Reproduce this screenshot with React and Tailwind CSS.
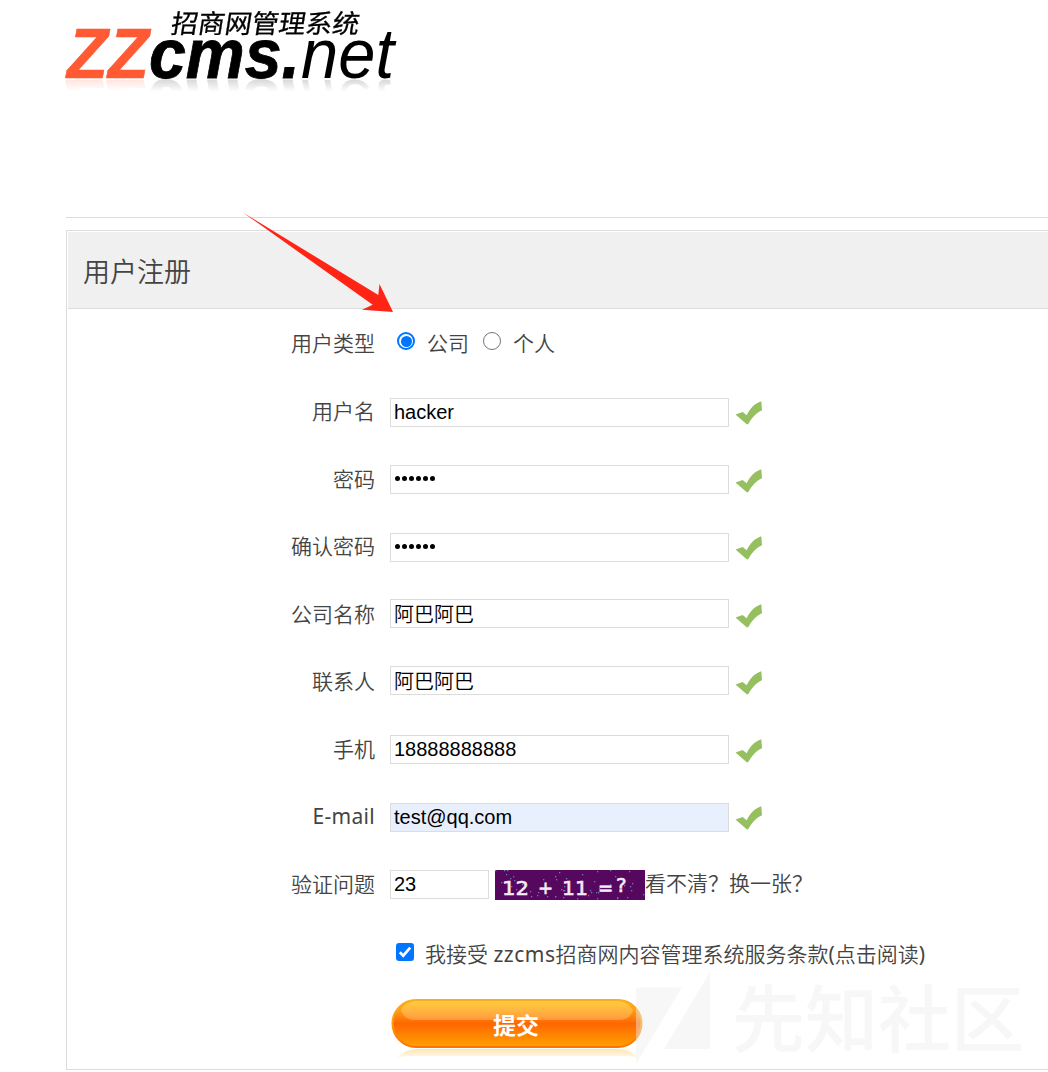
import React from "react";

const LATIN = "font-['Liberation_Sans','Noto_Sans_CJK_SC',sans-serif]";

function Logo() {
  return (
    <svg
      className={`block h-[79px] w-[420px] [-webkit-box-reflect:below_0px_linear-gradient(transparent_84%,rgba(0,0,0,0.16))] ${LATIN}`}
      viewBox="0 0 420 79"
    >
      <text x="67" y="78" fontSize="70" fontWeight="700" fontStyle="italic" fill="#ff5a33" stroke="#ff5a33" strokeWidth="0.6" textLength="82" lengthAdjust="spacingAndGlyphs">ZZ</text>
      <text x="149" y="78" fontSize="70" fontWeight="700" fontStyle="italic" stroke="#000" strokeWidth="0.8" textLength="151" lengthAdjust="spacingAndGlyphs">cms.</text>
      <text x="301" y="78" fontSize="70" fontStyle="italic" textLength="93" lengthAdjust="spacingAndGlyphs">net</text>
      <text transform="translate(170 32.5) skewX(-9)" x="0" y="0" fontSize="26" fontWeight="400" stroke="#000" strokeWidth="0.3" textLength="188" lengthAdjust="spacingAndGlyphs">招商网管理系统</text>
    </svg>
  );
}

function Tick() {
  return (
    <svg className="h-[24px] w-[28px]" viewBox="735 401 28 24">
      <path d="M735.5 414.6 742.6 412 746.7 415.3C750 408.5 754.5 403.5 761.3 401.3L762 410.3C756.5 412.8 751.5 418 748.2 424.3L746.7 424.2Z" fill="#96bf60" />
    </svg>
  );
}

function Label({ children, latin }) {
  return <div className={`-mt-px h-[67.5px] w-[308px] shrink-0 text-right leading-[68px] ${latin ? "font-normal tracking-[0.3px]" : ""}`}>{children}</div>;
}

const FIELDS = [
  { label: "用户名", value: "hacker", pos: "mt-[20px]" },
  { label: "密码", value: "••••••", pos: "mt-[19.5px]", dots: true },
  { label: "确认密码", value: "••••••", pos: "mt-[20px]", dots: true },
  { label: "公司名称", value: "阿巴阿巴", pos: "mt-[18.5px]", cjk: true },
  { label: "联系人", value: "阿巴阿巴", pos: "mt-[18px]", cjk: true },
  { label: "手机", value: "18888888888", pos: "mt-[19.5px]" },
  { label: "E-mail", value: "test@qq.com", pos: "mt-[20px]", filled: true },
];

function Box({ value, pos, filled, dots, cjk, width = "w-[339px]" }) {
  return (
    <div className={`ml-[15px] flex h-[29px] shrink-0 items-center border border-[#dcdcdc] pl-[3px] text-[20px] leading-[27px] text-black ${LATIN} ${width} ${pos} ${cjk ? "pt-[3px]" : ""} ${filled ? "bg-[#e8f0fe]" : "bg-white"}`}>
      {dots ? (
        <span className="flex gap-[2px] pb-[2px] pl-px" role="img" aria-label="password">
          {[...value].map((_, i) => <i key={i} className="size-[5px] rounded-full bg-black" />)}
        </span>
      ) : value}
    </div>
  );
}

const SPECKS = Array.from({ length: 60 }, (_, i) => [(i * 47 + (i * i * 13) % 31) % 149, (i * 19 + (i * i * 7) % 23) % 29]);

function Captcha() {
  return (
    <svg className="ml-[6px] mt-[19.5px] h-[30px] w-[150px] shrink-0 font-['DejaVu_Sans',sans-serif]" viewBox="0 0 150 30">
      <rect width="150" height="30" fill="#56085f" />
      {SPECKS.map(([x, y], i) => <rect key={i} x={x} y={y} width="1.3" height="1.3" fill="#6a78ad" />)}
      <g fill="#f6eaf6" stroke="#f6eaf6" strokeWidth="0.6" fontSize="20" fontWeight="400">
        <text x="7" y="25" textLength="27" lengthAdjust="spacingAndGlyphs">12</text>
        <text x="43" y="24" fontSize="18">+</text>
        <text x="67" y="25" textLength="26" lengthAdjust="spacingAndGlyphs">11</text>
        <text x="103" y="24" fontSize="18">=</text>
        <text x="121" y="22">?</text>
      </g>
    </svg>
  );
}

function SubmitButton() {
  return (
    <div className="relative ml-[324px] h-[61px] w-[252px]">
      <svg className="block h-[61px] w-[252px]" viewBox="0 0 252 61">
        <defs>
          <linearGradient id="body" x1="0" y1="0" x2="0" y2="1">
            <stop offset="0" stopColor="#ffb91f" />
            <stop offset="0.25" stopColor="#ff9712" />
            <stop offset="0.5" stopColor="#ff6600" />
            <stop offset="0.75" stopColor="#ff8500" />
            <stop offset="1" stopColor="#ff9f00" />
          </linearGradient>
          <linearGradient id="edge" x1="0" y1="0" x2="0" y2="1">
            <stop offset="0" stopColor="#f6ae22" />
            <stop offset="0.5" stopColor="#ff9a10" />
            <stop offset="1" stopColor="#ff7300" />
          </linearGradient>
          <linearGradient id="gloss" x1="0" y1="0" x2="0" y2="1">
            <stop offset="0" stopColor="#ffcf40" stopOpacity="0.8" />
            <stop offset="1" stopColor="#ffb870" stopOpacity="0.5" />
          </linearGradient>
          <linearGradient id="under" x1="0" y1="50" x2="0" y2="59" gradientUnits="userSpaceOnUse">
            <stop offset="0" stopColor="#ffe6b0" />
            <stop offset="1" stopColor="#fffaf0" />
          </linearGradient>
        </defs>
        <path d="M6 59C12 53 18 50 28 50H226C236 50 242 53 247 59C239 57 235 57 226 57H28C18 57 12 57 6 59Z" fill="url(#under)" />
        <rect x="1.5" y="1" width="249" height="47" rx="23.5" fill="url(#body)" stroke="url(#edge)" strokeWidth="2" />
        <path d="M10 11C14 4 20 2 28 2H224C233 2 238 5 242 11C240 18 235 21 228 21H24C17 21 12 18 10 11Z" fill="url(#gloss)" />
      </svg>
      <span className="absolute left-0 top-[11px] w-[250px] text-center text-[23px] font-bold leading-[30px] text-white">提交</span>
    </div>
  );
}

export default function App() {
  return (
    <main className="relative h-[1072px] w-[1048px] overflow-hidden bg-white font-['Noto_Sans','Noto_Sans_CJK_SC',sans-serif] text-[21px] font-[350] text-[#444]">
      <header className="h-[217px]"><Logo /></header>
      <div className="ml-[66px] h-px bg-[#dcdcdc]" />
      <section className="ml-[66px] mt-[12px] h-[840px] border-y border-l border-[#dcdcdc]">
        <h1 className="ml-px mt-px h-[77px] border-b border-[#dcdcdc] bg-[#f0f0f0] pl-[15px] text-[27px] font-[350] leading-[80px]">用户注册</h1>
        <div className="flex h-[69px]">
          <div className="w-[308px] text-right leading-[69px]">用户类型</div>
          <span className="ml-[22px] mt-[23px] flex size-[18px] items-center justify-center rounded-full border-2 border-[#0075ff]"><i className="size-[11px] rounded-full bg-[#0075ff]" /></span>
          <span className="ml-[12px] leading-[69px]">公司</span>
          <span className="ml-[14px] mt-[23px] size-[18px] rounded-full border-[1.5px] border-[#767676]" />
          <span className="ml-[12px] leading-[69px]">个人</span>
        </div>
        {FIELDS.map((f) => (
          <div key={f.label} className="flex h-[67.5px]">
            <Label latin={f.filled}>{f.label}</Label>
            <Box {...f} />
            <div className="ml-[6px] mt-[23px]"><Tick /></div>
          </div>
        ))}
        <div className="flex h-[67.5px]">
          <Label>验证问题</Label>
          <Box value="23" pos="mt-[19.5px]" width="w-[99px]" />
          <Captcha />
          <span className="-mt-px whitespace-nowrap leading-[67.5px]">看不清？换一张？</span>
        </div>
        <div className="flex h-[81px]">
          <span className="ml-[329px] mt-[25px] flex size-[18px] items-center justify-center rounded-[3px] bg-[#0075ff]">
            <svg className="size-[18px]" viewBox="0 0 18 18"><path d="M3.8 9.3 7.2 12.7 14.2 4.7" fill="none" stroke="#fff" strokeWidth="2.7" /></svg>
          </span>
          <span className="ml-[11px] whitespace-nowrap leading-[73px]">我接受 <span className="font-normal tracking-[0.5px]">zzcms</span>招商网内容管理系统服务条款<span className="font-normal">(</span>点击阅读<span className="font-normal">)</span></span>
        </div>
        <SubmitButton />
      </section>
      <svg className="pointer-events-none absolute left-[240px] top-[208px] h-[108px] w-[156px]" viewBox="240 208 156 108">
        <path d="M243 212.5 378.3 295 379.5 284 393 312 362 309.7 372.7 304.7Z" fill="#ff2413" />
      </svg>
      <div className="pointer-events-none absolute left-[636px] top-[970px] flex text-[#f7f7f7]">
        <svg className="h-[95px] w-[75px]" viewBox="636 970 75 95" fill="#ededed" fillOpacity="0.45">
          <path d="M636 987.5H682L636 1064ZM710 972V1049H664Z" />
        </svg>
        <span className="ml-[21px] whitespace-nowrap text-[73px] font-medium leading-[96px]">先知社区</span>
      </div>
    </main>
  );
}
